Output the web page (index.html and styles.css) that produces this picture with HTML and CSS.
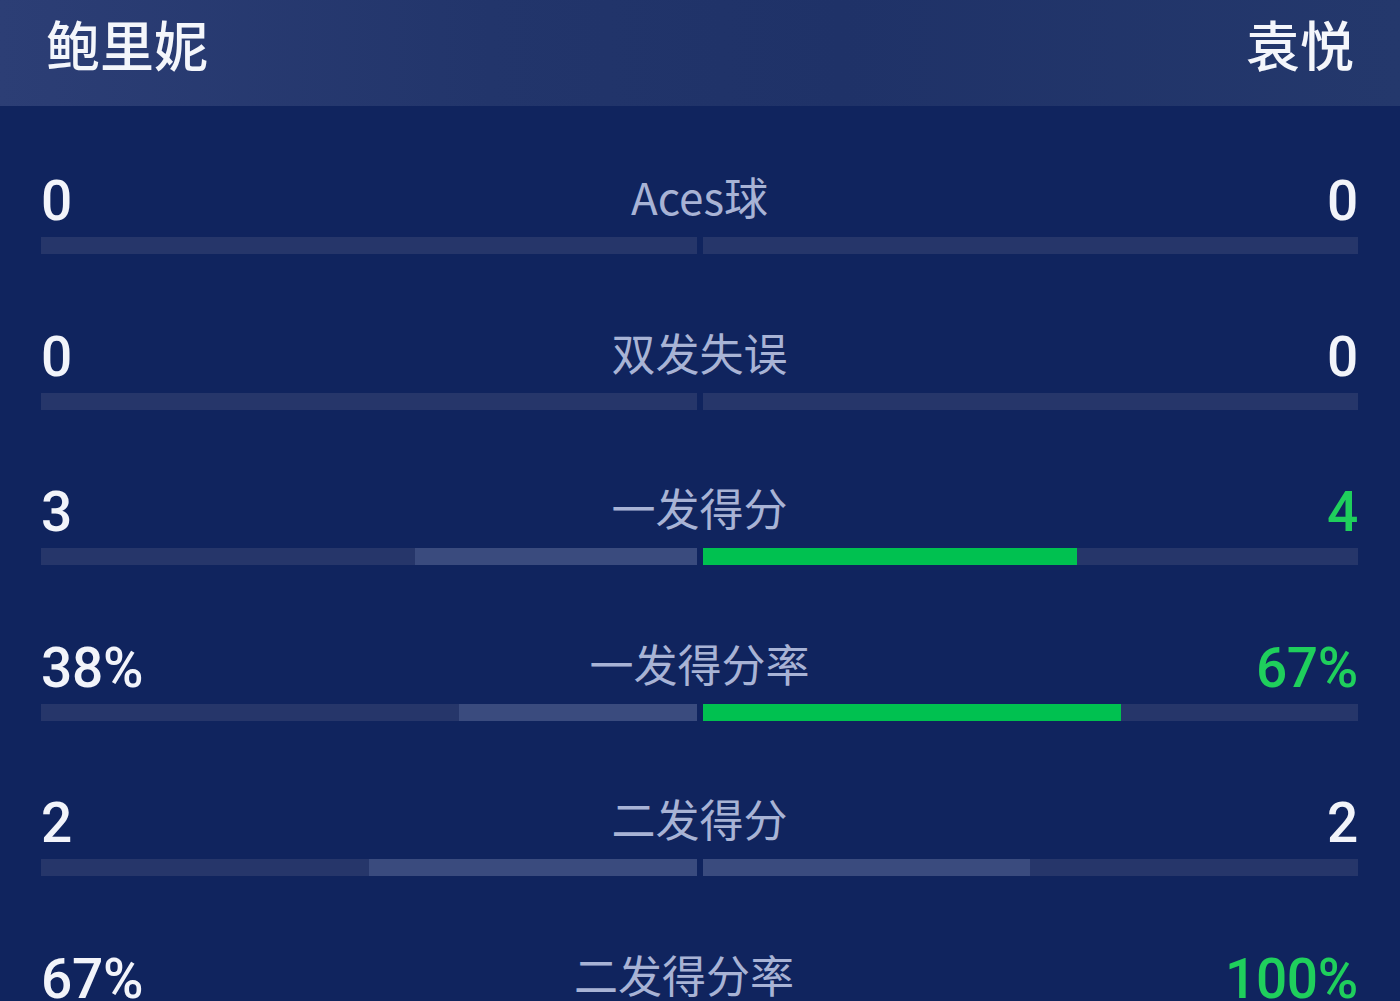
FILE: index.html
```html
<!DOCTYPE html>
<html lang="zh">
<head>
<meta charset="utf-8">
<link rel="stylesheet" href="styles.css">
</head>
<body>
<div class="page">
  <header class="head">
    <div class="name">鲍里妮</div>
    <div class="name">袁悦</div>
  </header>
  <main class="stats">
    <section class="row">
      <div class="line"><span class="val">0</span><span class="label">Aces球</span><span class="val right">0</span></div>
      <div class="bars"><div class="track left"></div><div class="track"></div></div>
    </section>
    <section class="row">
      <div class="line"><span class="val">0</span><span class="label">双发失误</span><span class="val right">0</span></div>
      <div class="bars"><div class="track left"></div><div class="track"></div></div>
    </section>
    <section class="row">
      <div class="line"><span class="val">3</span><span class="label">一发得分</span><span class="val right win">4</span></div>
      <div class="bars"><div class="track left"><div class="fill" style="width:42.9%"></div></div><div class="track"><div class="fill green" style="width:57.1%"></div></div></div>
    </section>
    <section class="row">
      <div class="line"><span class="val">38%</span><span class="label">一发得分率</span><span class="val right win">67%</span></div>
      <div class="bars"><div class="track left"><div class="fill" style="width:36.2%"></div></div><div class="track"><div class="fill green" style="width:63.8%"></div></div></div>
    </section>
    <section class="row">
      <div class="line"><span class="val">2</span><span class="label">二发得分</span><span class="val right">2</span></div>
      <div class="bars"><div class="track left"><div class="fill" style="width:50%"></div></div><div class="track"><div class="fill" style="width:50%"></div></div></div>
    </section>
    <section class="row">
      <div class="line"><span class="val">67%</span><span class="label">二发得分率</span><span class="val right win">100%</span></div>
      <div class="bars"><div class="track left"><div class="fill" style="width:40%"></div></div><div class="track"><div class="fill green" style="width:60%"></div></div></div>
    </section>
  </main>
</div>
</body>
</html>
```

FILE: styles.css
```css
html, body {
  margin: 0;
  padding: 0;
  background: #10245e;
  height: 1001px;
  overflow: hidden;
}
.page {
  width: 1400px;
  font-family: "Noto Sans CJK SC", "Noto Sans", sans-serif;
}
.head {
  height: 106px;
  box-sizing: border-box;
  padding: 0 46px 0 46px;
  display: flex;
  justify-content: space-between;
  align-items: flex-start;
  background: linear-gradient(90deg, #2c3e75 0%, #22356b 35%, #1f3268 60%, #24386c 100%);
}
.name {
  color: #f4f6fb;
  font-size: 54px;
  line-height: 88px;
  font-weight: 500;
}
.stats {
  padding: 63px 42px 0 41px;
  display: flex;
  flex-direction: column;
  gap: 70.5px;
}
.row {
  display: flex;
  flex-direction: column;
  gap: 4px;
}
.line {
  display: flex;
  align-items: baseline;
  height: 64px;
}
.val {
  font-family: Roboto, "Noto Sans", sans-serif;
  font-size: 55px;
  line-height: 64px;
  font-weight: 500;
  color: #f2f4fa;
  letter-spacing: -0.3px;
}
.val.win {
  color: #1fcf5c;
}
.label {
  flex: 1;
  text-align: center;
  font-size: 44px;
  line-height: 64px;
  color: #a8b3d5;
  font-weight: 400;
  position: relative;
  top: -5px;
}
.bars {
  display: flex;
  gap: 6px;
  height: 17px;
}
.track {
  flex: 1;
  background: #26366a;
  display: flex;
}
.track.left {
  justify-content: flex-end;
}
.fill {
  height: 100%;
  background: #3a4b7e;
}
.fill.green {
  background: #00c150;
}
```
